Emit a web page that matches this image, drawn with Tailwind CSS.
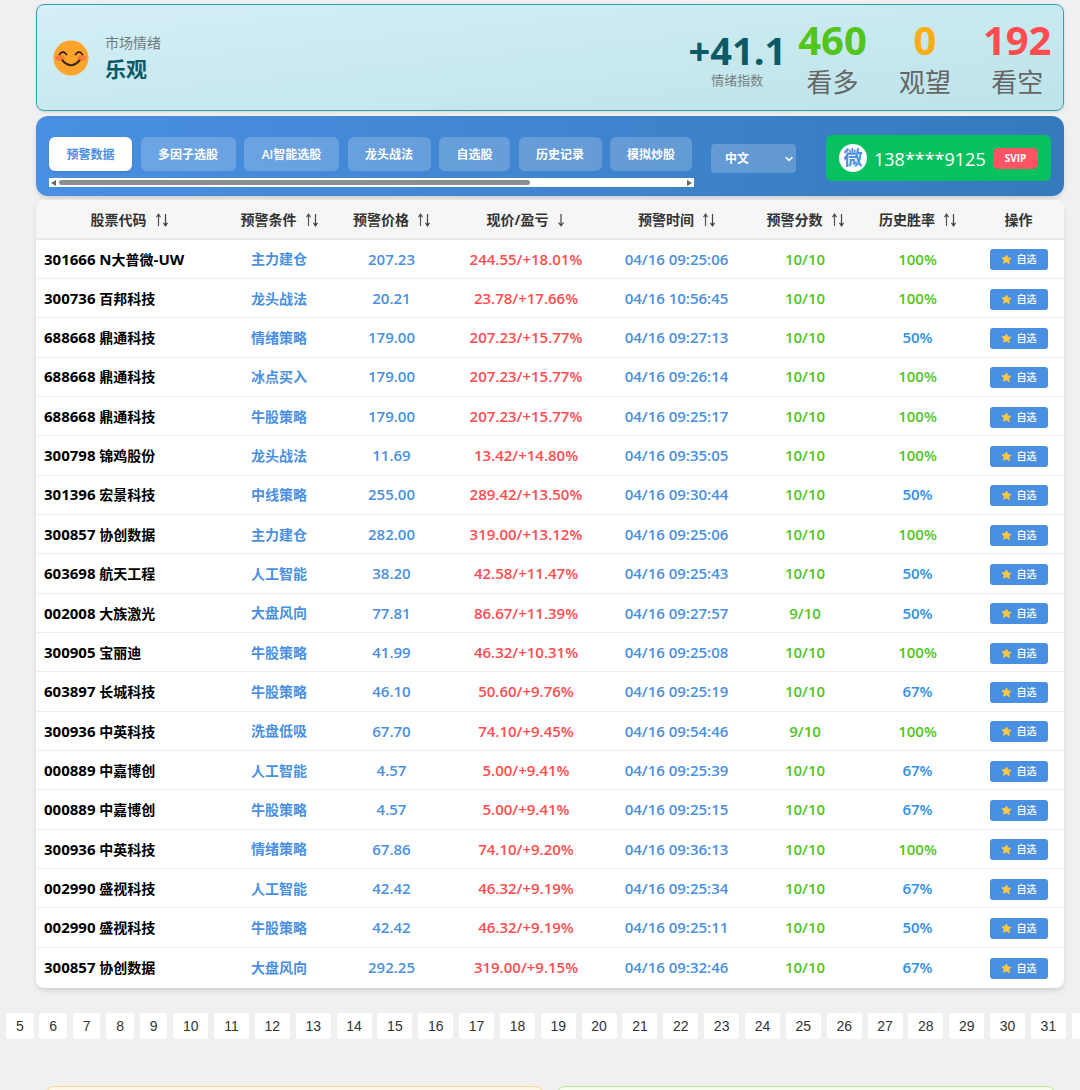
<!DOCTYPE html>
<html lang="zh-CN"><head><meta charset="utf-8"><title>预警数据</title>
<script src="https://cdn.jsdelivr.net/npm/@tailwindcss/browser@4"></script></head>
<body class="bg-[#f0f0f0] font-['Open_Sans','Noto_Sans_CJK_SC',sans-serif]">
<svg class="hidden"><symbol id="star" viewBox="0 0 24 24"><path d="M12 2.2l3 6.3 6.9.9-5 4.8 1.3 6.9L12 16.8l-6.2 3.3 1.3-6.9-5-4.8 6.9-.9z" fill="#ffc83d" stroke="#ffc83d" stroke-width="2" stroke-linejoin="round"/></symbol>
<symbol id="ud" viewBox="0 0 12 14"><path d="M2.5 13V2M.5 4.2 2.5 1.2l2 3" fill="none" stroke="#555" stroke-width="1.2"/><path d="M9.5 1v11M7.5 9.8l2 3 2-3" fill="none" stroke="#444" stroke-width="1.2"/></symbol>
<symbol id="dn" viewBox="0 0 8 14"><path d="M4 1v11M1.6 9.6 4 12.8l2.4-3.2" fill="none" stroke="#444" stroke-width="1.2"/></symbol></svg>
<div class="h-[1090px] overflow-hidden pt-[4px]">
<header class="ml-[36px] w-[1028px] h-[107px] rounded-lg border-[1.5px] border-[#2fa5b3] bg-gradient-to-br from-[#d4eff5] to-[#bde3ea] shadow-sm flex items-center pl-[16px] pr-[11.5px]">
  <svg class="w-[36px] h-[36px] shrink-0" viewBox="0 0 36 36"><circle cx="18" cy="18" r="17.5" fill="#fca42b"/><ellipse cx="7" cy="18" rx="4.5" ry="3" fill="#f96d3e" opacity=".75"/><ellipse cx="29" cy="18" rx="4.5" ry="3" fill="#f96d3e" opacity=".75"/><path d="M6.5 14.5q3.5-5 7 0M22.5 14.5q3.5-5 7 0" fill="none" stroke="#3a2a1c" stroke-width="1.8" stroke-linecap="round"/><path d="M9.5 20.5q8.5 9.5 17 0" fill="none" stroke="#3a2a1c" stroke-width="2.2" stroke-linecap="round"/></svg>
  <div class="ml-[16px]">
    <div class="text-[14px] leading-[20px] mt-[1px] text-[#6f7a7e]">市场情绪</div>
    <div class="text-[21px] leading-[30px] mt-[1px] font-bold text-[#0b5a66]">乐观</div>
  </div>
  <div class="ml-auto flex items-center">
    <div class="text-center mr-[12px] mt-[4px]">
      <div class="text-[38px] leading-[41px] font-bold text-[#0b5a66]">+41.1</div>
      <div class="text-[13px] leading-[18px] text-[#777f83]">情绪指数</div>
    </div>
    <div class="flex gap-[32px] text-center mt-[2px]">
      <div><div class="text-[40px] leading-[46px] font-bold text-[#52c41a]">460</div><div class="text-[26px] leading-[38px] text-[#666]">看多</div></div>
      <div class="w-[52px]"><div class="text-[40px] leading-[46px] font-bold text-[#faad14]">0</div><div class="text-[26px] leading-[38px] text-[#666]">观望</div></div>
      <div><div class="text-[40px] leading-[46px] font-bold text-[#ff4d4f]">192</div><div class="text-[26px] leading-[38px] text-[#666]">看空</div></div>
    </div>
  </div>
</header>
<nav class="ml-[36px] mt-[5px] w-[1028px] h-[80px] rounded-xl bg-gradient-to-r from-[#4a90e2] to-[#357abd] shadow-md flex items-start pl-[13px] pr-[13px]">
  <div class="w-[645px] mt-[21px]">
    <div class="flex gap-[8.5px] text-[12px] font-semibold text-white leading-[16px] [&_span]:pt-[1px]">
      <span class="h-[34px] w-[83px] rounded-md bg-white text-[#4a90e2] flex items-center justify-center shadow-sm">预警数据</span>
      <span class="h-[34px] w-[95px] rounded-md bg-white/20 flex items-center justify-center">多因子选股</span>
      <span class="h-[34px] w-[95px] rounded-md bg-white/20 flex items-center justify-center">AI智能选股</span>
      <span class="h-[34px] w-[83px] rounded-md bg-white/20 flex items-center justify-center">龙头战法</span>
      <span class="h-[34px] w-[71px] rounded-md bg-white/20 flex items-center justify-center">自选股</span>
      <span class="h-[34px] w-[83px] rounded-md bg-white/20 flex items-center justify-center">历史记录</span>
      <span class="h-[34px] w-[82px] rounded-md bg-white/20 flex items-center justify-center">模拟炒股</span>
    </div>
    <div class="mt-[7px] h-[9px] bg-white flex items-center px-[2px]">
      <svg class="w-[5px] h-[6px] shrink-0" viewBox="0 0 5 6"><path d="M5 0v6L0 3z" fill="#666"/></svg>
      <div class="ml-[3px] w-[471px] h-[5px] rounded-full bg-[#8a8d91]"></div>
      <svg class="ml-auto w-[5px] h-[6px] shrink-0" viewBox="0 0 5 6"><path d="M0 0v6l5-3z" fill="#666"/></svg>
    </div>
  </div>
  <div class="ml-[17px] mt-[28px] w-[85px] h-[29px] rounded bg-white/20 flex items-center justify-between pl-[14px] pr-[2px] text-[12px] font-semibold text-white">
    <span>中文</span>
    <svg class="w-[10px] h-[10px]" viewBox="0 0 10 10"><path d="M2 3.5l3 3 3-3" fill="none" stroke="#fff" stroke-width="1.5" stroke-linecap="round" stroke-linejoin="round"/></svg>
  </div>
  <div class="ml-auto mt-[19px] w-[225px] h-[46px] rounded-md bg-[#07c160] flex items-center pl-[13px]">
    <span class="w-[28px] h-[28px] rounded-full bg-white text-[#4a90e2] flex items-center justify-center text-[19px] font-bold">微</span>
    <span class="ml-[7px] mt-[2px] text-[18px] text-white w-[112px] whitespace-nowrap">138****9125</span>
    <span class="ml-[7px] mt-[1px] w-[45px] h-[21px] rounded-[5px] bg-[#fb5563] text-white text-[10px] font-bold flex items-center justify-center">SVIP</span>
  </div>
</nav>
<main class="ml-[36px] mt-[4px] w-[1028px] h-[788px] rounded-lg bg-white shadow-md overflow-hidden">
<table class="w-full table-fixed border-collapse text-center text-[15px] font-semibold">
  <colgroup><col class="w-[186px]"><col class="w-[114px]"><col class="w-[111px]"><col class="w-[158px]"><col class="w-[143px]"><col class="w-[114px]"><col class="w-[111px]"><col class="w-[91px]"></colgroup>
  <thead class="bg-[#f6f6f6] text-[#333] text-[14px] [&_tr]:h-[39px] [&_th]:border-b-2 [&_th]:border-[#e8e8e8] [&_th]:font-bold [&_svg]:inline-block [&_svg]:h-[14px] [&_svg]:ml-[9px] [&_svg]:align-[-2px]">
    <tr><th>股票代码<svg class="w-[12px]"><use href="#ud"/></svg></th><th>预警条件<svg class="w-[12px]"><use href="#ud"/></svg></th><th>预警价格<svg class="w-[12px]"><use href="#ud"/></svg></th><th>现价/盈亏<svg class="w-[8px]"><use href="#dn"/></svg></th><th>预警时间<svg class="w-[12px]"><use href="#ud"/></svg></th><th>预警分数<svg class="w-[12px]"><use href="#ud"/></svg></th><th>历史胜率<svg class="w-[12px]"><use href="#ud"/></svg></th><th>操作</th></tr>
  </thead>
  <tbody class="[&_tr]:h-[39.35px] [&_td]:border-b [&_td]:border-[#eeeeee] [&_tr:last-child_td]:border-b-0 [&_td:nth-child(1)]:text-left [&_td:nth-child(1)]:pl-[8px] [&_td:nth-child(1)]:text-black [&_td:nth-child(1)]:font-bold [&_td:nth-child(1)_span]:text-[14px] [&_td:nth-child(2)]:text-[14px] [&_td:nth-child(2)]:text-[#4a90e2] [&_td:nth-child(3)]:text-[#4a90e2] [&_td:nth-child(4)]:text-[#ff4d4f] [&_td:nth-child(5)]:text-[#4a90e2] [&_td:nth-child(6)]:text-[#52c41a] [&_b]:font-medium [&_b]:mx-auto [&_b]:translate-y-[1px] [&_b]:w-[58px] [&_b]:h-[21px] [&_b]:rounded-[3px] [&_b]:bg-[#4a90e2] [&_b]:text-white [&_b]:text-[10px] [&_b]:flex [&_b]:items-center [&_b]:justify-center [&_b]:gap-[5px] [&_svg]:w-[11px] [&_svg]:h-[11px]">
<tr><td>301666 N<span>大普微</span>-UW</td><td>主力建仓</td><td>207.23</td><td>244.55/+18.01%</td><td>04/16 09:25:06</td><td>10/10</td><td class="text-[#52c41a]">100%</td><td><b><svg><use href="#star"/></svg>自选</b></td></tr>
<tr><td>300736 <span>百邦科技</span></td><td>龙头战法</td><td>20.21</td><td>23.78/+17.66%</td><td>04/16 10:56:45</td><td>10/10</td><td class="text-[#52c41a]">100%</td><td><b><svg><use href="#star"/></svg>自选</b></td></tr>
<tr><td>688668 <span>鼎通科技</span></td><td>情绪策略</td><td>179.00</td><td>207.23/+15.77%</td><td>04/16 09:27:13</td><td>10/10</td><td class="text-[#2f8fe6]">50%</td><td><b><svg><use href="#star"/></svg>自选</b></td></tr>
<tr><td>688668 <span>鼎通科技</span></td><td>冰点买入</td><td>179.00</td><td>207.23/+15.77%</td><td>04/16 09:26:14</td><td>10/10</td><td class="text-[#52c41a]">100%</td><td><b><svg><use href="#star"/></svg>自选</b></td></tr>
<tr><td>688668 <span>鼎通科技</span></td><td>牛股策略</td><td>179.00</td><td>207.23/+15.77%</td><td>04/16 09:25:17</td><td>10/10</td><td class="text-[#52c41a]">100%</td><td><b><svg><use href="#star"/></svg>自选</b></td></tr>
<tr><td>300798 <span>锦鸡股份</span></td><td>龙头战法</td><td>11.69</td><td>13.42/+14.80%</td><td>04/16 09:35:05</td><td>10/10</td><td class="text-[#52c41a]">100%</td><td><b><svg><use href="#star"/></svg>自选</b></td></tr>
<tr><td>301396 <span>宏景科技</span></td><td>中线策略</td><td>255.00</td><td>289.42/+13.50%</td><td>04/16 09:30:44</td><td>10/10</td><td class="text-[#2f8fe6]">50%</td><td><b><svg><use href="#star"/></svg>自选</b></td></tr>
<tr><td>300857 <span>协创数据</span></td><td>主力建仓</td><td>282.00</td><td>319.00/+13.12%</td><td>04/16 09:25:06</td><td>10/10</td><td class="text-[#52c41a]">100%</td><td><b><svg><use href="#star"/></svg>自选</b></td></tr>
<tr><td>603698 <span>航天工程</span></td><td>人工智能</td><td>38.20</td><td>42.58/+11.47%</td><td>04/16 09:25:43</td><td>10/10</td><td class="text-[#2f8fe6]">50%</td><td><b><svg><use href="#star"/></svg>自选</b></td></tr>
<tr><td>002008 <span>大族激光</span></td><td>大盘风向</td><td>77.81</td><td>86.67/+11.39%</td><td>04/16 09:27:57</td><td>9/10</td><td class="text-[#2f8fe6]">50%</td><td><b><svg><use href="#star"/></svg>自选</b></td></tr>
<tr><td>300905 <span>宝丽迪</span></td><td>牛股策略</td><td>41.99</td><td>46.32/+10.31%</td><td>04/16 09:25:08</td><td>10/10</td><td class="text-[#52c41a]">100%</td><td><b><svg><use href="#star"/></svg>自选</b></td></tr>
<tr><td>603897 <span>长城科技</span></td><td>牛股策略</td><td>46.10</td><td>50.60/+9.76%</td><td>04/16 09:25:19</td><td>10/10</td><td class="text-[#2f8fe6]">67%</td><td><b><svg><use href="#star"/></svg>自选</b></td></tr>
<tr><td>300936 <span>中英科技</span></td><td>洗盘低吸</td><td>67.70</td><td>74.10/+9.45%</td><td>04/16 09:54:46</td><td>9/10</td><td class="text-[#52c41a]">100%</td><td><b><svg><use href="#star"/></svg>自选</b></td></tr>
<tr><td>000889 <span>中嘉博创</span></td><td>人工智能</td><td>4.57</td><td>5.00/+9.41%</td><td>04/16 09:25:39</td><td>10/10</td><td class="text-[#2f8fe6]">67%</td><td><b><svg><use href="#star"/></svg>自选</b></td></tr>
<tr><td>000889 <span>中嘉博创</span></td><td>牛股策略</td><td>4.57</td><td>5.00/+9.41%</td><td>04/16 09:25:15</td><td>10/10</td><td class="text-[#2f8fe6]">67%</td><td><b><svg><use href="#star"/></svg>自选</b></td></tr>
<tr><td>300936 <span>中英科技</span></td><td>情绪策略</td><td>67.86</td><td>74.10/+9.20%</td><td>04/16 09:36:13</td><td>10/10</td><td class="text-[#52c41a]">100%</td><td><b><svg><use href="#star"/></svg>自选</b></td></tr>
<tr><td>002990 <span>盛视科技</span></td><td>人工智能</td><td>42.42</td><td>46.32/+9.19%</td><td>04/16 09:25:34</td><td>10/10</td><td class="text-[#2f8fe6]">67%</td><td><b><svg><use href="#star"/></svg>自选</b></td></tr>
<tr><td>002990 <span>盛视科技</span></td><td>牛股策略</td><td>42.42</td><td>46.32/+9.19%</td><td>04/16 09:25:11</td><td>10/10</td><td class="text-[#2f8fe6]">50%</td><td><b><svg><use href="#star"/></svg>自选</b></td></tr>
<tr><td>300857 <span>协创数据</span></td><td>大盘风向</td><td>292.25</td><td>319.00/+9.15%</td><td>04/16 09:32:46</td><td>10/10</td><td class="text-[#2f8fe6]">67%</td><td><b><svg><use href="#star"/></svg>自选</b></td></tr>
  </tbody>
</table>
</main>
<div class="mt-[25px] flex gap-[5.85px] pl-[6px] overflow-hidden font-['Liberation_Sans',sans-serif] text-[14px] text-[#333] [&_span]:shrink-0 [&_span]:h-[26px] [&_span]:rounded-[3px] [&_span]:bg-white [&_span]:flex [&_span]:items-center [&_span]:justify-center [&_span]:w-[35px]">
<span class="!w-[27.6px]">5</span><span class="!w-[27.6px]">6</span><span class="!w-[27.6px]">7</span><span class="!w-[27.6px]">8</span><span class="!w-[27.6px]">9</span><span>10</span><span>11</span><span>12</span><span>13</span><span>14</span><span>15</span><span>16</span><span>17</span><span>18</span><span>19</span><span>20</span><span>21</span><span>22</span><span>23</span><span>24</span><span>25</span><span>26</span><span>27</span><span>28</span><span>29</span><span>30</span><span>31</span><span></span>
</div>
<div class="mt-[47px] ml-[46px] flex gap-[14px]">
  <div class="w-[497px] h-[40px] rounded-t-lg border border-[#ffd591] bg-[#fff7e6]"></div>
  <div class="w-[498px] h-[40px] rounded-t-lg border border-[#b7eb8f] bg-[#f6ffed]"></div>
</div>
</div>
</body></html>
